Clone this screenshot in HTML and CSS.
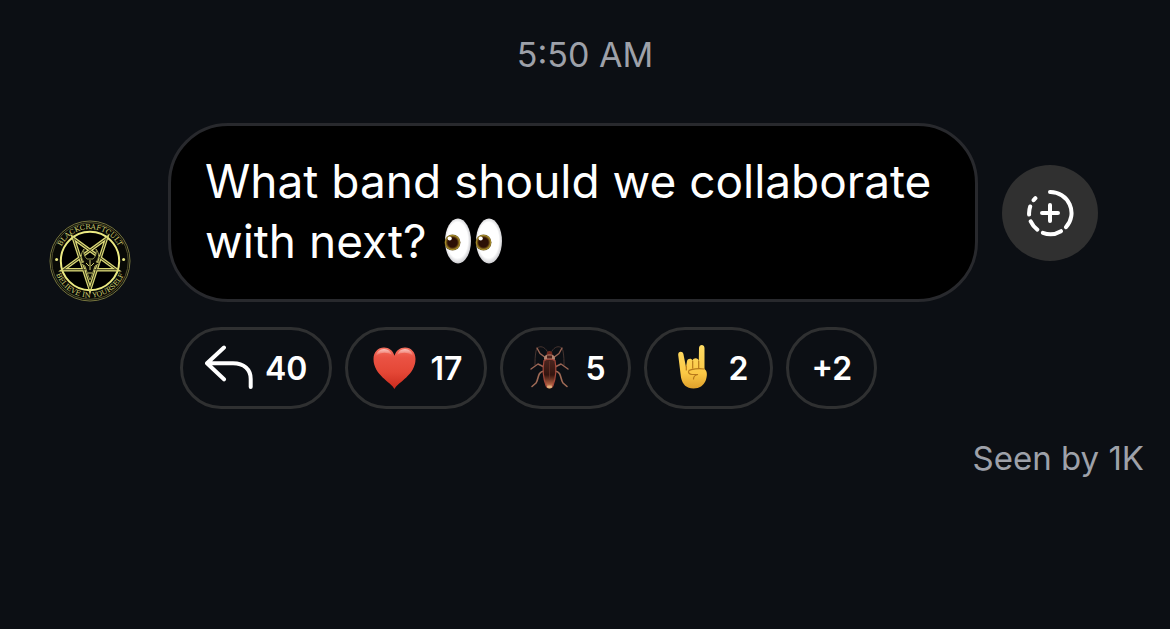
FILE: index.html
```html
<!DOCTYPE html>
<html lang="en">
<head>
<meta charset="utf-8">
<meta name="viewport" content="width=device-width, initial-scale=1">
<title>Channel message</title>
<link rel="stylesheet" href="styles.css">
</head>
<body>
<main class="thread">
  <time class="timestamp" datetime="05:50">5:50 AM</time>

  <article class="message">
    <svg class="avatar" viewBox="0 0 82 82" role="img" aria-label="Blackcraftcult">
      <defs>
        <path id="arc-top" d="M9 41a32 32 0 0 1 64 0"/>
        <path id="arc-bottom" d="M4.500 41a36.500 36.500 0 0 0 73 0"/>
      </defs>
      <circle cx="41" cy="41" r="40" fill="#090a06" stroke="#77763f"/>
      <circle cx="41" cy="41" r="38.300" fill="none" stroke="#66653a" stroke-width=".8"/>
      <g class="avatar-text">
        <text><textPath href="#arc-top" startOffset="50%">BLACKCRAFTCULT</textPath></text>
        <text><textPath href="#arc-bottom" startOffset="50%">BELIEVE IN YOURSELF</textPath></text>
      </g>
      <g fill="#ecea83"><circle cx="7.600" cy="39.500" r="1.500"/><circle cx="74.600" cy="39.500" r="1.500"/></g>
      <circle cx="41" cy="41" r="29.200" fill="#000" stroke="#ecea83" stroke-width="2"/>
      <g fill="none" stroke-linejoin="miter">
        <path d="M41 69 24.500 18.300 67.600 49.700H14.400L57.500 18.300Z" stroke="#d8d675" stroke-width="3.400"/>
        <path d="M41 69 24.500 18.300 67.600 49.700H14.400L57.500 18.300Z" stroke="#3a391c" stroke-width="1"/>
      </g>
      <path d="M35 29c-1 5 1 8 3 10h6c2-2 4-5 3-10 4 5 3 10 0 13l4 1-5 3-3 9-2 5-2-5-3-9-5-3 4-1c-3-3-4-8 0-13Z" fill="#0c0c06" stroke="#a9a85a" stroke-width=".9"/>
      <path d="m37 43 3 3m5-3-3 3m-1-6v10m-2 3h4" stroke="#cfcd70" fill="none"/>
    </svg>

    <p class="bubble">What band should we collaborate with next?
      <svg class="eyes" viewBox="0 0 60 46" role="img" aria-label="eyes">
        <defs>
          <radialGradient id="white" cx=".48" cy=".48" r=".53"><stop offset=".75" stop-color="#fff"/><stop offset="1" stop-color="#c9c9cd"/></radialGradient>
          <radialGradient id="iris"><stop offset=".58" stop-color="#2c1006"/><stop offset=".7" stop-color="#5b3a0d"/><stop offset=".88" stop-color="#a38a28"/><stop offset="1" stop-color="#66501b"/></radialGradient>
        </defs>
        <ellipse cx="15" cy="23" rx="13" ry="22.400" fill="url(#white)"/>
        <ellipse cx="46" cy="23" rx="13" ry="22.400" fill="url(#white)"/>
        <circle cx="9.500" cy="24.500" r="8" fill="url(#iris)"/>
        <circle cx="40.500" cy="24.500" r="8" fill="url(#iris)"/>
        <circle cx="6.700" cy="20.500" r="2.100" fill="#fff"/>
        <circle cx="37.700" cy="20.500" r="2.100" fill="#fff"/>
      </svg>
    </p>

    <button class="share" type="button" aria-label="Add to story">
      <svg class="icon line-icon" viewBox="0 0 48 48" aria-hidden="true">
        <path d="M24 3A21 21 0 0 1 40 38.200M35 42.200A21 21 0 0 1 16.900 43.800M11.300 40.600A21 21 0 0 1 4.700 32.400M3.100 25.600A21 21 0 0 1 4.200 17.500M7.600 11.200 9.400 9.200M24 16v16M16 24h16"/>
      </svg>
    </button>
  </article>

  <div class="reactions">
    <button class="chip" type="button" aria-label="40 replies">
      <svg class="icon line-icon" viewBox="0 0 48 48" aria-hidden="true"><path d="M19 3.500 2 19.300 19 35.300M2 19.300h26C39 19.300 45.700 25.500 45.700 35v8"/></svg>
      <span>40</span>
    </button>
    <button class="chip" type="button" aria-label="17 hearts">
      <svg class="icon" viewBox="0 0 48 48" aria-hidden="true">
        <defs>
          <linearGradient id="heart" x2="0" y2="1"><stop stop-color="#f4705f"/><stop offset=".25" stop-color="#ea5243"/><stop offset=".6" stop-color="#e44736"/><stop offset="1" stop-color="#c92a1d"/></linearGradient>
          <linearGradient id="gloss" x2="0" y2="1"><stop stop-color="#fff" stop-opacity=".6"/><stop offset="1" stop-color="#fff" stop-opacity="0"/></linearGradient>
        </defs>
        <path d="M24.500 45C21 38 3.500 31 3.500 15 3.500 8 8 3.400 14 3.400c5 0 9 3 10.500 8.400C26 6.400 30 3.400 35 3.400c6 0 10.500 4.600 10.500 11.600C45.500 31 28 38 24.500 45Z" fill="url(#heart)"/>
        <path d="M6 12c.5-4 4-7 8-7s6.500 2 8 6c-5-3-11-3-16 1Zm21-1c1.500-4 4-6 8-6s7.500 3 8 7c-5-4-11-4-16-1Z" fill="url(#gloss)"/>
      </svg>
      <span>17</span>
    </button>
    <button class="chip" type="button" aria-label="5 cockroaches">
      <svg class="icon" viewBox="0 0 48 48" aria-hidden="true">
        <defs><linearGradient id="shell" x2="0" y2="1"><stop stop-color="#4c2620"/><stop offset=".55" stop-color="#35150f"/><stop offset=".85" stop-color="#a6583c"/><stop offset="1" stop-color="#d89a6c"/></linearGradient></defs>
        <g fill="none" stroke-linecap="round" stroke-linejoin="round">
          <path d="M23 9C20 1 12 1 11 7s-1 9-1 14M26 9c3-8 11-8 12-2s1 9 1 14" stroke="#533c36" stroke-width=".8"/>
          <path d="M21 14 15 9.500 12 4m16 10 6-4.500L37 4M19 23l-6-3-7 5m24-2 6-3 7 5" stroke="#9a6554" stroke-width="1.400"/>
          <path d="M19 27c-7 1-5 8-8 12l-4 3.500m23-15.500c7 1 5 8 8 12l4 3.500" stroke="#a06b56" stroke-width="1.600"/>
        </g>
        <path d="M22 8.500c1-2 4-2 5 0l1 4h-7Z" fill="#70291f"/>
        <path d="M19 15c0-3.500 2-4.500 5.500-4.500S30 11.500 30 15l-1 2h-9Z" fill="#b48470"/>
        <path d="M22 11.500h5v3h-5Z" fill="#4b211b"/>
        <path d="M19 16.500c3-1.500 8-1.500 11 0 1.500 8 1 17-2 25-1 3-6 3-7 0-3-8-3.500-17-2-25Z" fill="url(#shell)" stroke="#a4473a" stroke-width="1.200"/>
        <path d="M24.500 17v19" stroke="#6d3529" stroke-width=".7"/>
        <ellipse cx="24.500" cy="43" rx="2.700" ry="1.400" fill="#e1ae7b"/>
      </svg>
      <span>5</span>
    </button>
    <button class="chip" type="button" aria-label="2 horns">
      <svg class="icon" viewBox="0 0 48 48" aria-hidden="true">
        <defs><linearGradient id="hand" x2="0" y2="1"><stop stop-color="#ffdc65"/><stop offset=".65" stop-color="#fbc845"/><stop offset="1" stop-color="#dfa02b"/></linearGradient></defs>
        <path d="M9.200 11c-.5-4 4.500-4.500 5.200-1l2.600 13 1-6c.6-3 5-3 5.500-.5.800-3 6-3 6.300.5L30 4c.2-4 5.500-4 5.500 0v21c3 2 3 7 1 12-2 4.500-6 7.500-12 7.500-7 0-11-4-12.500-11Z" fill="url(#hand)"/>
        <path d="M17.300 22v4M23.700 17v7m6-7v7M20 26.500c2-1.500 10-2.500 15-1.500M20 26.500c-1.500 2 .5 4 3 4h6c-3 .5-4.500 2-4.500 4.500" fill="none" stroke="#b7791b" stroke-width="1.200" stroke-linecap="round"/>
      </svg>
      <span>2</span>
    </button>
    <button class="chip" type="button" aria-label="2 more reactions"><span>+2</span></button>
  </div>

  <p class="seen">Seen by 1K</p>
</main>
</body>
</html>
```
FILE: styles.css
```css
* {
  box-sizing: border-box;
}

body {
  margin: 0;
  min-height: 100vh;
  background: #0c0f14;
  color: #fff;
  font-family: Inter, "Liberation Sans", sans-serif;
}

button {
  padding: 0;
  color: inherit;
  font: inherit;
}

.thread {
  display: flex;
  flex-direction: column;
  padding: 35px 26px 34px 49px;
}

.timestamp {
  margin-right: -26px;
  margin-left: -49px;
  color: #9ea1a9;
  font-size: 34px;
  line-height: 40px;
  text-align: center;
}

.message {
  display: flex;
  align-items: center;
  margin-top: 48px;
}

.avatar {
  flex: none;
  align-self: flex-end;
  width: 82px;
  height: 82px;
  margin-right: 37px;
}

.avatar-text {
  fill: #d2d074;
  font-family: "DejaVu Serif", serif;
  font-size: 7px;
  text-anchor: middle;
}

.bubble {
  flex: 0 1 810px;
  margin: 0;
  padding: 25px 34px 28px;
  border: 3px solid #28292d;
  border-radius: 60px;
  background: #000;
  font-size: 46px;
  line-height: 60px;
}

.eyes {
  width: 60px;
  height: 46px;
  margin-left: 4px;
  vertical-align: -6px;
}

.share {
  display: grid;
  flex: none;
  place-items: center;
  width: 96px;
  height: 96px;
  margin-left: 24px;
  border: 0;
  border-radius: 50%;
  background: #303030;
}

.icon {
  flex: none;
  width: 48px;
  height: 48px;
}

.line-icon {
  fill: none;
  stroke: #fff;
  stroke-width: 4;
  stroke-linecap: round;
  stroke-linejoin: round;
}

.reactions {
  display: flex;
  flex-wrap: wrap;
  gap: 13px;
  margin-top: 25px;
  margin-left: 131px;
}

.chip {
  display: flex;
  align-items: center;
  gap: 12px;
  height: 82px;
  padding: 0 22px;
  border: 3px solid #2f3031;
  border-radius: 41px;
  background: transparent;
  font-size: 32px;
  font-weight: 600;
}

.seen {
  margin: 29px 0 0;
  color: #9ea1a9;
  font-size: 33px;
  line-height: 40px;
  text-align: right;
}
```
